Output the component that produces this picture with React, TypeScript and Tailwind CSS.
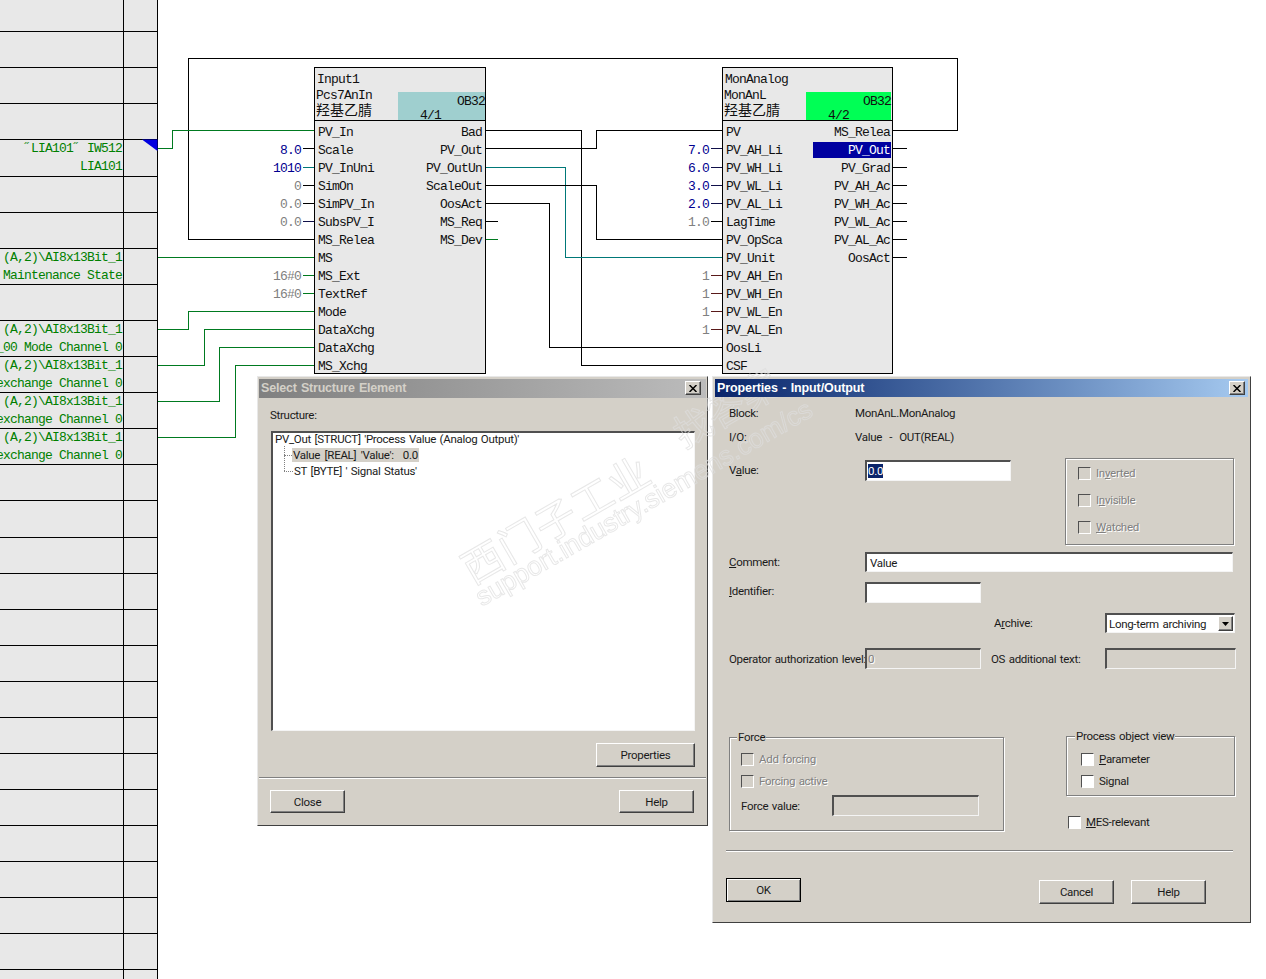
import React from "react";

const MONO = "font-['Liberation_Mono','DejaVu_Sans_Mono',monospace] text-[13px] tracking-[-0.8px] leading-[18px]";
const UI = "font-['Roboto','Liberation_Sans',Arial,sans-serif] text-[11.5px] tracking-[-0.3px] [word-spacing:1px] leading-[14px] text-[#1a1a1a]";
const RAISED = "border border-t-white border-l-white border-r-[#404040] border-b-[#404040] shadow-[inset_-1px_-1px_0_#808080]";
const SUNKEN = "border-t-2 border-l-2 border-b border-r border-t-[#505050] border-l-[#505050] border-b-[#f4f4f4] border-r-[#f4f4f4]";
const ETCHED = "border border-[#808080] shadow-[1px_1px_0_#fff,inset_1px_1px_0_#fff]";
const DISABLED = "text-[#808080] [text-shadow:1px_1px_0_#fff]";

const ROWS = [
  { h: "h-[32px]" }, { h: "h-[36px]" }, { h: "h-[36px]" }, { h: "h-[36px]" },
  { h: "h-[37px]", a: "\u02DDLIA101\u02DD IW512", b: "LIA101" },
  { h: "h-[36px]" }, { h: "h-[36px]" },
  { h: "h-[36px]", a: "(A,2)\\AI8x13Bit_1", b: "Maintenance State" },
  { h: "h-[36px]" },
  { h: "h-[36px]", a: "(A,2)\\AI8x13Bit_1", b: "_00 Mode Channel 0" },
  { h: "h-[36px]", a: "(A,2)\\AI8x13Bit_1", b: "exchange Channel 0" },
  { h: "h-[36px]", a: "(A,2)\\AI8x13Bit_1", b: "exchange Channel 0" },
  { h: "h-[36px]", a: "(A,2)\\AI8x13Bit_1", b: "exchange Channel 0" },
  { h: "h-[36px]" }, { h: "h-[37px]" }, { h: "h-[36px]" }, { h: "h-[36px]" }, { h: "h-[36px]" },
  { h: "h-[36px]" }, { h: "h-[36px]" }, { h: "h-[36px]" }, { h: "h-[36px]" }, { h: "h-[36px]" },
  { h: "h-[36px]" }, { h: "h-[36px]" }, { h: "h-[36px]" }, { h: "h-[36px]" },
];

function Sidebar() {
  return (
    <div className="flex h-full w-[158px] shrink-0 flex-col overflow-hidden border-r border-black bg-[#e8e8e8]">
      {ROWS.map((r, i) => (
        <div key={i} className={`flex shrink-0 border-b border-black ${r.h}`}>
          <div className={`flex w-[124px] flex-col items-end justify-center overflow-hidden border-r border-black pr-[1px] text-[#008000] ${MONO}`}>
            {r.a && <span className="whitespace-nowrap">{r.a}</span>}
            {r.b && <span className="whitespace-nowrap">{r.b}</span>}
          </div>
          <div className="flex-1" />
        </div>
      ))}
      <div className="flex flex-1">
        <div className="w-[124px] border-r border-black" />
      </div>
    </div>
  );
}

type Pin = { label: string; value?: string; color?: string; active?: boolean };

const BLUE = "text-[#000090]";
const GREY = "text-[#808080]";

function FuncBlock({ pos, width, title, type, code, box, boxW, num, left, right, rightPad }: { pos: string; width: string; title: string; type: string; code: string; box: string; boxW: string; num: string; left: Pin[]; right: Pin[]; rightPad: string }) {
  return (
    <div className={`absolute flex h-[307px] flex-col border border-black bg-[#e8e8e8] text-[#101010] ${MONO} ${pos} ${width}`}>
      <div className="flex h-[53px] shrink-0 border-b border-black">
        <div className="flex w-[83px] shrink-0 flex-col pl-[1px]">
          <span className="pl-[1px] pt-[2px] leading-[19px]">{title}</span>
          <span className="leading-[13px]">{type}</span>
          <span className="font-['Noto_Sans_CJK_SC','Noto_Sans_CJK_JP',sans-serif] text-[14px] leading-[15px] tracking-normal">{code}</span>
        </div>
        <div className="flex flex-1 flex-col justify-end pr-[1px]">
          <div className={`relative h-[28px] ${boxW} ${box}`}>
            <span className="absolute right-0 top-[1px]">OB32</span>
            <span className="absolute left-[22px] top-[15px]">{num}</span>
          </div>
        </div>
      </div>
      <div className="flex flex-1 justify-between pt-[3px]">
        <div className="flex flex-col pl-[3px]">
          {left.map((p, i) => (
            <div key={i} className="relative h-[18px] whitespace-nowrap">
              {p.label}
              {p.value && <span className={`absolute right-[calc(100%+17px)] top-0 ${p.color}`}>{p.value}</span>}
            </div>
          ))}
        </div>
        <div className={`flex flex-col items-end ${rightPad}`}>
          {right.map((p, i) => (
            <div key={i} className={`whitespace-nowrap pr-[1px] ${p.active ? "mb-[2px] flex h-[16px] w-[78px] justify-end overflow-hidden bg-[#0000a0] text-white" : "h-[18px]"}`}>{p.label}</div>
          ))}
        </div>
      </div>
    </div>
  );
}

const L1: Pin[] = [
  { label: "PV_In" }, { label: "Scale", value: "8.0", color: BLUE }, { label: "PV_InUni", value: "1010", color: BLUE },
  { label: "SimOn", value: "0", color: GREY }, { label: "SimPV_In", value: "0.0", color: GREY }, { label: "SubsPV_I", value: "0.0", color: GREY },
  { label: "MS_Relea" }, { label: "MS" }, { label: "MS_Ext", value: "16#0", color: GREY }, { label: "TextRef", value: "16#0", color: GREY },
  { label: "Mode" }, { label: "DataXchg" }, { label: "DataXchg" }, { label: "MS_Xchg" },
];
const R1: Pin[] = [{ label: "Bad" }, { label: "PV_Out" }, { label: "PV_OutUn" }, { label: "ScaleOut" }, { label: "OosAct" }, { label: "MS_Req" }, { label: "MS_Dev" }];
const L2: Pin[] = [
  { label: "PV" }, { label: "PV_AH_Li", value: "7.0", color: BLUE }, { label: "PV_WH_Li", value: "6.0", color: BLUE }, { label: "PV_WL_Li", value: "3.0", color: BLUE },
  { label: "PV_AL_Li", value: "2.0", color: BLUE }, { label: "LagTime", value: "1.0", color: GREY }, { label: "PV_OpSca" }, { label: "PV_Unit" },
  { label: "PV_AH_En", value: "1", color: GREY }, { label: "PV_WH_En", value: "1", color: GREY }, { label: "PV_WL_En", value: "1", color: GREY }, { label: "PV_AL_En", value: "1", color: GREY },
  { label: "OosLi" }, { label: "CSF" },
];
const R2: Pin[] = [{ label: "MS_Relea" }, { label: "PV_Out", active: true }, { label: "PV_Grad" }, { label: "PV_AH_Ac" }, { label: "PV_WH_Ac" }, { label: "PV_WL_Ac" }, { label: "PV_AL_Ac" }, { label: "OosAct" }];

const G = "#007a20";
const K = "#000000";
const T = "#007878";
const N = "#10104a";
const M = "#5a1a1a";
const WIRES: [string, string][] = [
  ["M188.5 239.5V58.5H957.5V130.5H893", K],
  ["M188 239.5H314", K],
  ["M158 148.5H172.5V130.5H314", G],
  ["M303 148.5H314", K], ["M303 167.5H314", T], ["M303 185.5H314", K], ["M303 203.5H314", K], ["M303 221.5H314", N],
  ["M158 257.5H314", G], ["M303 275.5H314", G], ["M303 293.5H314", G],
  ["M158 329.5H188.5V311.5H314", G], ["M158 365.5H204.5V329.5H314", G], ["M158 401.5H219.5V347.5H314", G], ["M158 437.5H235.5V365.5H314", G],
  ["M486 130.5H581.5V365.5H722", K], ["M486 148.5H596.5V130.5H722", K], ["M486 167.5H565.5V257.5H722", T], ["M486 185.5H596.5V239.5H722", K],
  ["M486 203.5H549.5V347.5H722", K], ["M486 221.5H498", K], ["M486 239.5H498", G],
  ["M711 148.5H722", N], ["M711 167.5H722", N], ["M711 185.5H722", N], ["M711 203.5H722", N], ["M711 221.5H722", K],
  ["M711 275.5H722", M], ["M711 293.5H722", M], ["M711 311.5H722", M], ["M711 329.5H722", M],
  ["M893 148.5H907", K], ["M893 167.5H907", K], ["M893 185.5H907", K], ["M893 203.5H907", K], ["M893 221.5H907", K], ["M893 239.5H907", K], ["M893 257.5H907", K],
];

function Wires() {
  return (
    <svg className="absolute left-0 top-0 h-[979px] w-[1266px]" viewBox="0 0 1266 979" fill="none">
      {WIRES.map(([d, c], i) => <path key={i} d={d} stroke={c} strokeWidth={1} shapeRendering="crispEdges" />)}
      <path d="M142 139.5H157.5V151Z" fill="#0000e0" />
    </svg>
  );
}

function CloseBtn() {
  return (
    <div className={`flex h-[14px] w-[16px] items-center justify-center bg-[#d4d0c8] ${RAISED}`}>
      <svg width="8" height="7" viewBox="0 0 8 7"><path d="M0.5 0L7.5 7M7.5 0L0.5 7" stroke="#000" strokeWidth="1.5" /></svg>
    </div>
  );
}

function Btn({ children, cls }: { children: React.ReactNode; cls: string }) {
  return <div className={`flex items-center justify-center bg-[#d4d0c8] ${RAISED} ${cls}`}>{children}</div>;
}

function Check({ label, disabled }: { label: React.ReactNode; disabled?: boolean }) {
  return (
    <div className="flex items-center gap-[5px]">
      <div className={`h-[13px] w-[13px] shrink-0 border-t border-l border-t-[#505050] border-l-[#505050] border-b border-r border-b-white border-r-white ${disabled ? "bg-[#d4d0c8]" : "bg-white"}`} />
      <span className={disabled ? DISABLED : ""}>{label}</span>
    </div>
  );
}

function SelectDialog() {
  return (
    <div className={`absolute left-[257px] top-[376px] flex h-[450px] w-[451px] flex-col bg-[#d4d0c8] p-[1px] ${UI} border border-t-[#e8e8e8] border-l-[#e8e8e8] border-r-[#404040] border-b-[#404040]`}>
      <div className="mt-[1px] flex h-[19px] shrink-0 items-center justify-between bg-gradient-to-r from-[#808080] to-[#bcbcbc] pb-[1px] pl-[2px] pr-[5px]">
        <span className="font-['Liberation_Sans',sans-serif] text-[12.5px] font-bold tracking-[-0.2px] text-[#d4d0c8]">Select Structure Element</span>
        <CloseBtn />
      </div>
      <div className="pl-[11px] pt-[10px]">Structure:</div>
      <div className={`ml-[12px] mt-[9px] h-[300px] w-[424px] shrink-0 bg-white pl-[2px] ${SUNKEN}`}>
        <div className="mb-[3px] flex h-[11px] items-center">PV_Out [STRUCT] 'Process Value (Analog Output)'</div>
        <div className="relative flex h-[16px] items-center pl-[17px]">
          <span className="absolute left-[9px] top-[-1px] h-[25px] border-l border-dotted border-[#808080]" />
          <span className="absolute left-[9px] top-[8px] w-[8px] border-t border-dotted border-[#808080]" />
          <span className="whitespace-pre bg-[#d4d0c8] px-[1px] [word-spacing:2px]">Value [REAL] 'Value':  0.0</span>
        </div>
        <div className="relative flex h-[16px] items-center pl-[19px]">
          <span className="absolute left-[9px] top-[8px] w-[9px] border-t border-dotted border-[#808080]" />
          ST [BYTE] ' Signal Status'
        </div>
      </div>
      <div className="mt-[12px] flex justify-end pr-[11px]">
        <Btn cls="h-[24px] w-[99px]">Properties</Btn>
      </div>
      <div className="mt-[10px] h-[2px] shrink-0 border-t border-[#808080] bg-white" />
      <div className="mt-[11px] flex justify-between pl-[11px] pr-[12px]">
        <Btn cls="h-[23px] w-[75px]">Close</Btn>
        <Btn cls="h-[23px] w-[75px]">Help</Btn>
      </div>
    </div>
  );
}

function Field({ cls, children, bg = "bg-white" }: { cls: string; children?: React.ReactNode; bg?: string }) {
  return <div className={`flex shrink-0 items-center ${SUNKEN} ${bg} ${cls}`}>{children}</div>;
}

function PropsDialog() {
  return (
    <div className={`absolute left-[712px] top-[376px] flex h-[547px] w-[539px] flex-col bg-[#d4d0c8] ${UI} border border-t-[#e8e8e8] border-l-[#e8e8e8] border-r-[#404040] border-b-[#404040]`}>
      <div className="relative z-10 mx-[2px] mt-[2px] flex h-[18px] shrink-0 items-center justify-between bg-gradient-to-r from-[#0a246a] to-[#a6caf0] pl-[2px] pr-[3px]">
        <span className="font-['Liberation_Sans',sans-serif] text-[12.5px] font-bold tracking-[-0.1px] text-white">Properties - Input/Output</span>
        <CloseBtn />
      </div>
      <div className="flex flex-1 flex-col pl-[16px]">
        <div className="relative z-10 mt-[3px] flex h-[25px] shrink-0 items-center"><span className="w-[126px]">Block:</span><span>MonAnL.MonAnalog</span></div>
        <div className="relative z-10 flex h-[24px] shrink-0 items-center"><span className="w-[126px]">I/O:</span><span className="whitespace-pre">Value  -  OUT(REAL)</span></div>
        <div className="mt-[9px] flex h-[87px] shrink-0">
          <div className="flex w-[336px] shrink-0 items-start pt-[2px]">
            <span className="flex h-[19px] w-[136px] items-center"><span>V<u>a</u>lue:</span></span>
            <Field cls="h-[21px] w-[146px] pl-[1px]"><span className="bg-[#0a246a] text-white">0.0</span></Field>
          </div>
          <div className={`flex h-[87px] w-[169px] flex-col gap-[13px] pl-[12px] pt-[7px] ${ETCHED}`}>
            <Check disabled label={<>In<u>v</u>erted</>} />
            <Check disabled label={<>I<u>n</u>visible</>} />
            <Check disabled label={<><u>W</u>atched</>} />
          </div>
        </div>
        <div className="mt-[7px] flex h-[20px] shrink-0 items-center">
          <span className="w-[136px]"><u>C</u>omment:</span>
          <Field cls="h-[20px] w-[368px] pl-[3px]">Value</Field>
        </div>
        <div className="mt-[10px] flex h-[21px] shrink-0 items-center">
          <span className="w-[136px] pb-[3px]"><u>I</u>dentifier:</span>
          <Field cls="h-[21px] w-[116px]" />
        </div>
        <div className="mt-[10px] flex h-[20px] shrink-0 items-center">
          <span className="ml-[265px] w-[111px]">A<u>r</u>chive:</span>
          <Field cls="h-[20px] w-[130px] justify-between pl-[2px] pr-[1px]">
            <span>Long-term archiving</span>
            <span className={`flex h-[15px] w-[15px] items-center justify-center bg-[#d4d0c8] ${RAISED}`}>
              <svg width="7" height="4" viewBox="0 0 7 4"><path d="M0 0H7L3.5 4Z" fill="#000" /></svg>
            </span>
          </Field>
        </div>
        <div className="mt-[15px] flex h-[21px] shrink-0 items-center">
          <span className="w-[136px] whitespace-nowrap">Operator authorization level:</span>
          <Field cls="h-[21px] w-[116px] pl-[1px]" bg="bg-[#d4d0c8]"><span className={DISABLED}>0</span></Field>
          <span className="ml-[10px] w-[114px] whitespace-nowrap">OS additional text:</span>
          <Field cls="h-[21px] w-[131px]" bg="bg-[#d4d0c8]" />
        </div>
        <div className="mt-[67px] flex shrink-0">
          <div className={`relative mt-[1px] flex h-[94px] w-[275px] shrink-0 flex-col pl-[11px] pt-[14px] ${ETCHED}`}>
            <span className="absolute -top-[8px] left-[7px] bg-[#d4d0c8] px-[1px]">Force</span>
            <div className="flex flex-col gap-[8px]">
              <Check disabled label="Add forcing" />
              <Check disabled label="Forcing active" />
            </div>
            <div className="mt-[7px] flex items-center">
              <span className="w-[91px]">Force value:</span>
              <Field cls="h-[21px] w-[147px]" bg="bg-[#d4d0c8]" />
            </div>
          </div>
          <div className="ml-[62px] flex flex-col">
            <div className={`relative flex h-[60px] w-[169px] flex-col gap-[8px] pl-[14px] pt-[15px] ${ETCHED}`}>
              <span className="absolute -top-[8px] left-[8px] bg-[#d4d0c8] px-[1px]">Process object view</span>
              <Check label={<><u>P</u>arameter</>} />
              <Check label="Signal" />
            </div>
            <div className="ml-[2px] mt-[19px]"><Check label={<><u>M</u>ES-relevant</>} /></div>
          </div>
        </div>
        <div className="ml-[-3px] mt-[19px] h-[2px] w-[507px] shrink-0 border-t border-[#808080] bg-white" />
        <div className="ml-[-3px] mt-[26px] flex w-[480px] items-start">
          <div className="flex h-[24px] w-[75px] items-center justify-center border border-black bg-[#d4d0c8] shadow-[inset_1px_1px_0_#fff,inset_-1px_-1px_0_#808080]">OK</div>
          <div className="ml-auto mt-[2px] flex gap-[17px]">
            <Btn cls="h-[24px] w-[75px]">Cancel</Btn>
            <Btn cls="h-[24px] w-[75px]">Help</Btn>
          </div>
        </div>
      </div>
    </div>
  );
}

function Watermark() {
  const stroke = "text-transparent opacity-70 [-webkit-text-stroke:1px_#dedede]";
  return (
    <div className="pointer-events-none absolute inset-0 overflow-hidden">
      <div className={`absolute left-[450px] top-[497px] -rotate-[30deg] whitespace-nowrap font-['Noto_Sans_CJK_SC',sans-serif] text-[41px] leading-none tracking-[1px] ${stroke}`}>西门子工业</div>
      <div className={`absolute left-[452px] top-[490px] -rotate-[30deg] whitespace-nowrap font-['Liberation_Sans',sans-serif] text-[26.5px] leading-none ${stroke}`}>support.industry.siemens.com/cs</div>
      <div className={`absolute left-[668px] top-[388px] -rotate-[30deg] whitespace-nowrap font-['Noto_Sans_CJK_SC',sans-serif] text-[38px] leading-none ${stroke}`}>找答案</div>
    </div>
  );
}

export default function App() {
  return (
    <div className="relative flex h-[979px] w-[1266px] overflow-hidden bg-white">
      <Sidebar />
      <Wires />
      <FuncBlock pos="left-[314px] top-[67px]" width="w-[172px]" title="Input1" type="Pcs7AnIn" code="羟基乙腈" box="bg-[#9fcfcf]" boxW="w-[87px]" num="4/1" left={L1} right={R1} rightPad="pr-[2px]" />
      <FuncBlock pos="left-[722px] top-[67px]" width="w-[171px]" title="MonAnalog" type="MonAnL" code="羟基乙腈" box="bg-[#00ff55]" boxW="w-[85px]" num="4/2" left={L2} right={R2} rightPad="pr-[1px]" />
      <SelectDialog />
      <PropsDialog />
      <Watermark />
    </div>
  );
}
